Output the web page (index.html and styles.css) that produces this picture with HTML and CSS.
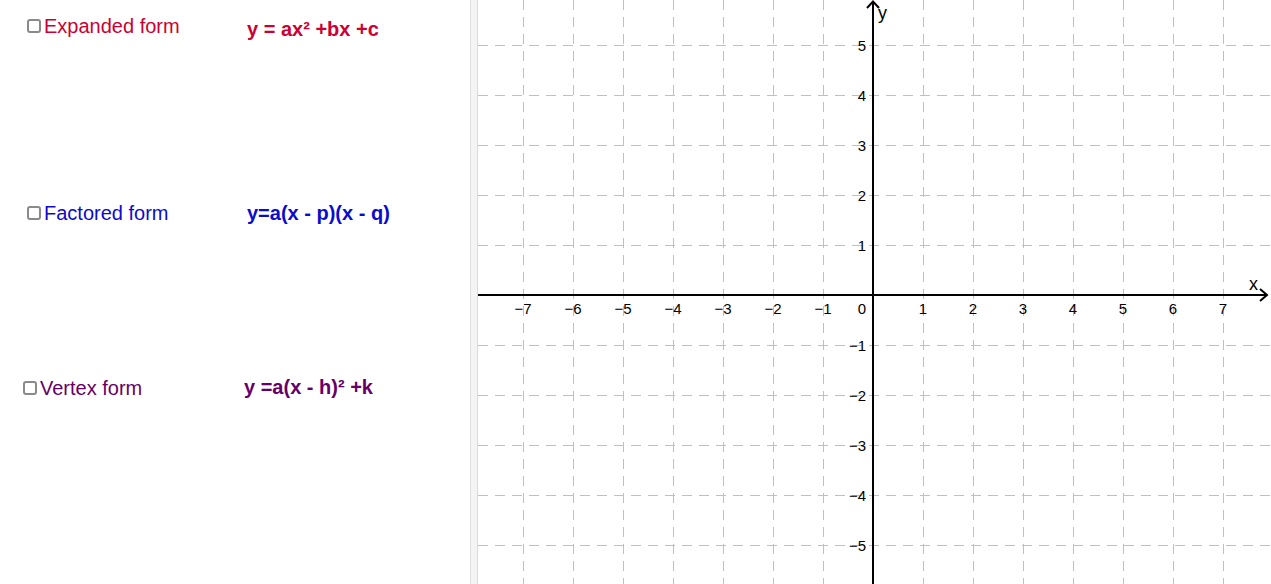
FILE: index.html
```html
<!DOCTYPE html>
<html>
<head>
<meta charset="utf-8">
<link rel="stylesheet" href="styles.css">
</head>
<body>
<div class="app">
  <div class="panel">
    <div class="row row1">
      <label class="opt red"><span class="box"></span>Expanded form</label>
      <span class="formula red f1">y = ax² +bx +c</span>
    </div>
    <div class="row row2">
      <label class="opt blue"><span class="box"></span>Factored form</label>
      <span class="formula blue f2">y=a(x - p)(x - q)</span>
    </div>
    <div class="row row3">
      <label class="opt purple"><span class="box"></span>Vertex form</label>
      <span class="formula purple f3">y =a(x - h)² +k</span>
    </div>
  </div>
  <div class="divider"></div>
  <div class="graphics">
    <svg class="plot" width="793" height="584" viewBox="0 0 793 584" xmlns="http://www.w3.org/2000/svg">
      <g class="grid" stroke="#c0c0c0" stroke-width="1" stroke-dasharray="10 7">
        <line x1="45.5" y1="0" x2="45.5" y2="584"/>
        <line x1="95.5" y1="0" x2="95.5" y2="584"/>
        <line x1="145.5" y1="0" x2="145.5" y2="584"/>
        <line x1="195.5" y1="0" x2="195.5" y2="584"/>
        <line x1="245.5" y1="0" x2="245.5" y2="584"/>
        <line x1="295.5" y1="0" x2="295.5" y2="584"/>
        <line x1="345.5" y1="0" x2="345.5" y2="584"/>
        <line x1="445.5" y1="0" x2="445.5" y2="584"/>
        <line x1="495.5" y1="0" x2="495.5" y2="584"/>
        <line x1="545.5" y1="0" x2="545.5" y2="584"/>
        <line x1="595.5" y1="0" x2="595.5" y2="584"/>
        <line x1="645.5" y1="0" x2="645.5" y2="584"/>
        <line x1="695.5" y1="0" x2="695.5" y2="584"/>
        <line x1="745.5" y1="0" x2="745.5" y2="584"/>
        <line x1="0" y1="45.5" x2="793" y2="45.5"/>
        <line x1="0" y1="95.5" x2="793" y2="95.5"/>
        <line x1="0" y1="145.5" x2="793" y2="145.5"/>
        <line x1="0" y1="195.5" x2="793" y2="195.5"/>
        <line x1="0" y1="245.5" x2="793" y2="245.5"/>
        <line x1="0" y1="345.5" x2="793" y2="345.5"/>
        <line x1="0" y1="395.5" x2="793" y2="395.5"/>
        <line x1="0" y1="445.5" x2="793" y2="445.5"/>
        <line x1="0" y1="495.5" x2="793" y2="495.5"/>
        <line x1="0" y1="545.5" x2="793" y2="545.5"/>
      </g>
      <g class="axes" stroke="#000" stroke-width="2" fill="none">
        <line x1="0" y1="295" x2="789" y2="295"/>
        <polyline points="782,289 789,295 782,301"/>
        <line x1="395" y1="584" x2="395" y2="1.5"/>
        <polyline points="389,8 395,1.5 401,8"/>
      </g>
      <g class="axisname">
        <text x="771" y="290">x</text>
        <text x="400" y="19">y</text>
      </g>
      <g class="nums xnums" text-anchor="middle">
        <text x="45" y="314">−7</text>
        <text x="95" y="314">−6</text>
        <text x="145" y="314">−5</text>
        <text x="195" y="314">−4</text>
        <text x="245" y="314">−3</text>
        <text x="295" y="314">−2</text>
        <text x="345" y="314">−1</text>
        <text x="445" y="314">1</text>
        <text x="495" y="314">2</text>
        <text x="545" y="314">3</text>
        <text x="595" y="314">4</text>
        <text x="645" y="314">5</text>
        <text x="695" y="314">6</text>
        <text x="745" y="314">7</text>
      </g>
      <g class="nums ynums" text-anchor="end">
        <text x="388" y="314">0</text>
        <text x="388" y="51">5</text>
        <text x="388" y="101">4</text>
        <text x="388" y="151">3</text>
        <text x="388" y="201">2</text>
        <text x="388" y="251">1</text>
        <text x="388" y="351">−1</text>
        <text x="388" y="401">−2</text>
        <text x="388" y="451">−3</text>
        <text x="388" y="501">−4</text>
        <text x="388" y="551">−5</text>
      </g>
    </svg>
  </div>
</div>
</body>
</html>
```

FILE: styles.css
```css
html, body {
  margin: 0;
  padding: 0;
  background: #ffffff;
  overflow: hidden;
}

.app {
  display: flex;
  width: 1271px;
  height: 584px;
  font-family: "Liberation Sans", Arial, sans-serif;
}

.panel {
  width: 470px;
  flex: none;
  display: flex;
  flex-direction: column;
}

.row {
  display: grid;
  grid-template-columns: 220px auto;
  align-items: start;
  font-size: 20px;
  line-height: 24px;
}

.row1 { margin-top: 14px; padding-left: 27px; }
.row2 { margin-top: 160px; padding-left: 27px; }
.row3 { margin-top: 151px; padding-left: 23px; grid-template-columns: 221px auto; }

.opt {
  display: flex;
  align-items: center;
  gap: 3px;
}

.box {
  width: 14px;
  height: 14px;
  box-sizing: border-box;
  border: 2px solid #8a8a8a;
  border-radius: 3px;
  background: #fff;
  flex: none;
}

.formula {
  font-weight: bold;
}

.f1 { margin-top: 3px; }
.f2 { margin-top: 0; }
.f3 { margin-top: -1px; }

.red { color: #cc0033; }
.blue { color: #0b0bcc; }
.purple { color: #660066; }

.divider {
  width: 8px;
  flex: none;
  box-sizing: border-box;
  background: #f4f4f4;
  border-left: 1px solid #e0e0e0;
  border-right: 1px solid #dadada;
}

.graphics {
  flex: 1;
  overflow: hidden;
}

.plot {
  display: block;
}

.nums text {
  font-family: "Liberation Sans", Arial, sans-serif;
  font-size: 15px;
  fill: #000;
}

.axisname text {
  font-family: "Liberation Sans", Arial, sans-serif;
  font-size: 18px;
  fill: #000;
}
```
